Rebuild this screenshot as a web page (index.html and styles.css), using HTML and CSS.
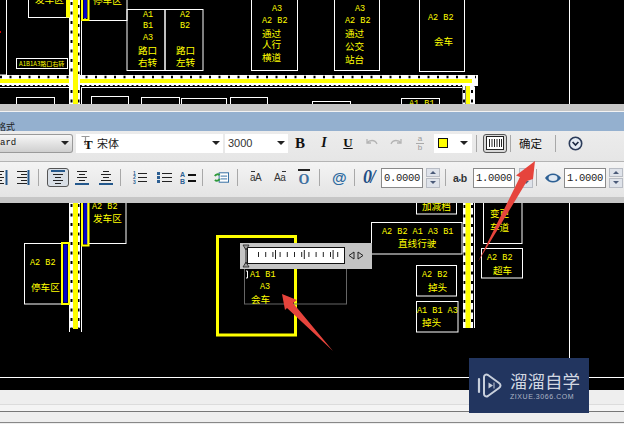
FILE: index.html
```html
<!DOCTYPE html>
<html lang="en">
<head>
    <meta charset="UTF-8">
    <meta name="viewport" content="width=device-width, initial-scale=1.0">
    <title>文字格式</title>
    <link rel="stylesheet" href="styles.css">
</head>
<body>
<div class="page">

    <!-- drawing above the text editor -->
    <div class="cad cad-top">
        <svg class="drawing" width="624" height="104" viewBox="0 0 624 104">
            <g class="box">
                <rect x="28.5" y="-10" width="40" height="27.5"/>
                <rect x="85" y="-10" width="42" height="30.5"/>
                <rect x="-10" y="-10" width="16.5" height="85"/>
                <rect x="16.5" y="58.5" width="51" height="10"/>
                <rect x="127" y="9.5" width="38" height="61"/>
                <rect x="165" y="9.5" width="38" height="61"/>
                <rect x="251.5" y="-10" width="46" height="80.5"/>
                <rect x="334.5" y="-10" width="45" height="80.5"/>
                <rect x="419.5" y="-10" width="45" height="81.5"/>
                <rect x="16.5" y="97.5" width="38" height="20"/>
                <rect x="91.5" y="96.5" width="37" height="20"/>
                <rect x="141.5" y="97.5" width="38" height="20"/>
                <rect x="181.5" y="98.5" width="45" height="20"/>
                <rect x="230.5" y="97.5" width="37" height="20"/>
                <rect x="312.5" y="101.5" width="38" height="20"/>
                <rect x="401.5" y="98.5" width="38" height="20"/>
                <line x1="569.5" y1="0" x2="569.5" y2="104"/>
            </g>
            <!-- right road, turn -->
            <line class="road-edge" x1="464" y1="76" x2="464" y2="104"/>
            <line class="road-dots" x1="464" y1="90" x2="464" y2="104"/>
            <line class="road-edge-wide" x1="472" y1="76" x2="472" y2="104"/>
            <line class="road-dots" x1="472" y1="90" x2="472" y2="104"/>
            <line class="road-core" x1="468" y1="80" x2="468" y2="104"/>
            <line class="road-line" x1="474.5" y1="87" x2="474.5" y2="104"/>
            <!-- main road across -->
            <rect class="road-band" x="0" y="75" width="478" height="11"/>
            <line class="road-marks" x1="0" y1="77" x2="476" y2="77"/>
            <line class="road-scallop" x1="0" y1="85.5" x2="462" y2="85.5"/>
            <line class="road-core" x1="0" y1="81" x2="472" y2="81"/>
            <line class="road-line" x1="0" y1="87.5" x2="69" y2="87.5"/>
            <line class="road-line" x1="81" y1="87.5" x2="462" y2="87.5"/>
            <!-- left road -->
            <rect class="road-band" x="69" y="0" width="11" height="104"/>
            <line class="road-dots" x1="71.5" y1="2" x2="71.5" y2="74"/>
            <line class="road-dots" x1="78.5" y1="5" x2="78.5" y2="74"/>
            <line class="road-dots" x1="71.5" y1="90" x2="71.5" y2="104"/>
            <line class="road-dots" x1="78.5" y1="90" x2="78.5" y2="104"/>
            <line class="road-core road-core-wide" x1="75.5" y1="0" x2="75.5" y2="104"/>
            <line class="road-line" x1="81.5" y1="21" x2="81.5" y2="75"/>
            <line class="road-line" x1="81.5" y1="88" x2="81.5" y2="104"/>
            <!-- bays -->
            <rect class="bay" x="66" y="-6" width="4" height="23.5"/>
            <rect class="bay-frame" x="82" y="-6" width="6.5" height="26"/>
            <rect class="bay-fill" x="83.5" y="-6" width="3.5" height="24"/>
            <rect class="red-dot" x="0" y="31" width="1" height="2"/>

            <text class="cn" x="35" y="3">发车区</text>
            <text class="cn" x="93" y="4">停车区</text>
            <text class="mini" x="19" y="66">A1B1A3路口右转</text>
            <text class="lt" x="143" y="17">A1</text>
            <text class="lt" x="143" y="28">B1</text>
            <text class="lt" x="143" y="40">A3</text>
            <text class="cn" x="138" y="53.5">路口</text>
            <text class="cn" x="138" y="66">右转</text>
            <text class="lt" x="180" y="17">A2</text>
            <text class="lt" x="180" y="28">B2</text>
            <text class="cn" x="176" y="53.5">路口</text>
            <text class="cn" x="176" y="66">左转</text>
            <text class="lt" x="272" y="10.5">A3</text>
            <text class="lt" x="262" y="23">A2 B2</text>
            <text class="cn" x="262" y="36.5">通过</text>
            <text class="cn" x="262" y="48">人行</text>
            <text class="cn" x="262" y="61">横道</text>
            <text class="lt" x="355" y="10.5">A3</text>
            <text class="lt" x="345" y="23">A2 B2</text>
            <text class="cn" x="345" y="36.5">通过</text>
            <text class="cn" x="345" y="49.5">公交</text>
            <text class="cn" x="345" y="62.5">站台</text>
            <text class="lt" x="428" y="20">A2 B2</text>
            <text class="cn" x="434" y="45">会车</text>
            <text class="lt" x="409" y="106">A1 B1</text>
        </svg>
    </div>

    <!-- text formatting toolbar -->
    <div class="editor">
        <div class="editor-strip"></div>
        <div class="editor-title"><span>文字格式</span></div>

        <div class="tool-row tool-row-top">
            <div class="select select-style">
                <span class="select-label">Standard</span>
                <i class="caret"></i>
            </div>
            <div class="select select-font ml-3">
                <span class="tt-icon">
                    <svg width="9" height="9" viewBox="0 0 9 9"><path d="M0.500 0.500h8M4.500 0.500v8M3 8.500h3" fill="none" stroke="#999" stroke-width="1.200"/></svg>
                    <b>T</b>
                </span>
                <span class="font-name">宋体</span>
                <i class="caret"></i>
            </div>
            <div class="select select-size ml-2">
                <span class="size-value">3000</span>
                <i class="caret"></i>
            </div>
            <span class="tool serif-btn bold">B</span>
            <span class="tool serif-btn italic">I</span>
            <span class="tool serif-btn underline">U</span>
            <span class="tool">
                <svg width="16" height="12" viewBox="0 0 16 12"><path class="dim-icon" d="M3 2v4h4M3 6c2-3 8-4 10 1"/></svg>
            </span>
            <span class="tool">
                <svg width="16" height="12" viewBox="0 0 16 12"><path class="dim-icon" d="M13 2v4H9M13 6c-2-3-8-4-10 1"/></svg>
            </span>
            <span class="tool stack-icon">
                <small>a</small><em></em><small>b</small>
            </span>
            <div class="select select-color ml-2">
                <i class="swatch"></i>
                <i class="caret caret-dark"></i>
            </div>
            <i class="sep ml-4"></i>
            <span class="ruler-btn ml-6">
                <svg width="18" height="14" viewBox="0 0 18 14"><rect x="0.5" y="0.5" width="17" height="13" fill="#fff" stroke="#222"/><path d="M3.5 3v8M6 3v8M8.5 3v8M11 3v8M13.5 3v8M15.5 3v8" stroke="#222" fill="none"/></svg>
            </span>
            <i class="sep ml-3"></i>
            <span class="ok-btn ml-8">确定</span>
            <i class="sep ml-12"></i>
            <span class="more-btn ml-12">
                <svg width="15" height="15" viewBox="0 0 15 15"><circle cx="7.5" cy="7.5" r="6.2" fill="#e4ebf4" stroke="#2c3c5a" stroke-width="1.6"/><path d="M4.6 6l2.9 3 2.9-3" fill="none" stroke="#1c2a44" stroke-width="1.7"/></svg>
            </span>
        </div>

        <div class="tool-row tool-row-bottom">
            <span class="tool-icon w-8">
                <svg width="8" height="15" viewBox="0 0 8 15"><path class="al-dark" d="M0 1.5h4M0 4.5h2M0 7.5h4M0 10.5h2M0 13.5h4"/><path class="al-blue" d="M6.5 0v15"/></svg>
            </span>
            <span class="tool-icon w-13 ml-9">
                <svg width="13" height="15" viewBox="0 0 13 15"><path class="al-dark" d="M0 1.5h10M4 4.5h6M0 7.5h10M4 10.5h6M0 13.5h10"/><path class="al-blue" d="M11.5 0v15"/></svg>
            </span>
            <i class="sep ml-8"></i>
            <span class="tool-icon tool-active ml-8">
                <svg width="14" height="15" viewBox="0 0 14 15"><path class="al-blue" d="M0 1h14"/><path class="al-dark" d="M2 4.5h10M4 7.5h6M2 10.5h10M4 13.5h6"/></svg>
            </span>
            <span class="tool-icon w-14 ml-6">
                <svg width="14" height="15" viewBox="0 0 14 15"><path class="al-dark" d="M2 1.5h10M4 4.5h6M2 7.5h10M4 10.5h6"/><path class="al-blue" d="M0 14h14"/></svg>
            </span>
            <span class="tool-icon w-14 ml-10">
                <svg width="14" height="15" viewBox="0 0 14 15"><path class="al-dark" d="M4 1.5h6M2 4.5h10M4 7.5h6M2 10.5h10"/><path class="al-blue" d="M0 14h14"/></svg>
            </span>
            <i class="sep ml-7"></i>
            <span class="tool-icon w-14 ml-12 num-list">
                <small>1<br>2<br>3</small>
                <svg width="9" height="13" viewBox="0 0 9 13"><path class="al-dark" d="M0 2.5h9M0 6.5h9M0 10.5h9"/></svg>
            </span>
            <span class="tool-icon w-15 ml-10">
                <svg width="15" height="13" viewBox="0 0 15 13"><path d="M0 1h3v3H0zM0 5h3v3H0zM0 9h3v3H0z" fill="#2c5f93"/><path class="al-dark" d="M5 2.5h10M5 6.5h10M5 10.5h10"/></svg>
            </span>
            <span class="tool-icon w-16 ml-8 ab-list">
                <small>A<br>B</small>
                <svg width="9" height="12" viewBox="0 0 9 12"><path d="M1 3h8M1 9h8" stroke="#111" stroke-width="2" fill="none"/></svg>
            </span>
            <i class="sep ml-6"></i>
            <span class="tool-icon w-15 ml-11">
                <svg width="16" height="13" viewBox="0 0 16 13"><rect x="5.5" y="1.5" width="10" height="10" fill="#fff" stroke="#2c6aa0"/><path d="M7 5h7M7 8h7" stroke="#2c6aa0" fill="none"/><path d="M1 5a3 3 0 0 1 5-1M6 8a3 3 0 0 1-5 1" fill="none" stroke="#2f9a3c" stroke-width="2"/></svg>
            </span>
            <i class="sep ml-8"></i>
            <span class="case-icon ml-12"><u></u>aA</span>
            <span class="case-icon case-right ml-12"><u></u>Aa</span>
            <span class="overline-icon ml-12">O</span>
            <i class="sep ml-9"></i>
            <span class="at-icon ml-12">@</span>
            <i class="sep ml-8"></i>
            <span class="oblique-icon ml-8">0/</span>
            <span class="num-input ml-5">0.0000</span>
            <span class="spin ml-3"><i class="up"></i><i class="down"></i></span>
            <i class="sep ml-5"></i>
            <span class="track-icon ml-7">a<small>•</small>b</span>
            <span class="num-input ml-5">1.0000</span>
            <span class="spin ml-4"><i class="up"></i><i class="down"></i></span>
            <i class="sep ml-3"></i>
            <span class="tool-icon w-16 ml-8">
                <svg width="16" height="10" viewBox="0 0 16 10"><path d="M0 5c4-6 12-6 16 0-4 6-12 6-16 0z" fill="#2c5f93"/><ellipse cx="8" cy="5" rx="4.5" ry="3" fill="#dfe8f2"/></svg>
            </span>
            <span class="num-input ml-3">1.0000</span>
            <span class="spin ml-3"><i class="up"></i><i class="down"></i></span>
        </div>
        <div class="editor-foot"></div>
    </div>

    <!-- drawing below the text editor -->
    <div class="cad cad-bottom">
        <svg class="drawing" width="624" height="187" viewBox="0 203 624 187">
            <g class="box">
                <rect x="88" y="190" width="38" height="53.5"/>
                <rect x="24.5" y="243.5" width="37" height="60.5"/>
                <rect x="416.5" y="190" width="40" height="24"/>
                <rect x="483.5" y="190" width="38.5" height="53.5"/>
                <rect x="481.5" y="248.5" width="41" height="29.5"/>
                <rect x="371.5" y="222.5" width="90.5" height="31.5"/>
                <rect x="416.5" y="265.5" width="40" height="30.5"/>
                <rect x="416.5" y="301.5" width="41.5" height="30.5"/>
                <line x1="569.5" y1="203" x2="569.5" y2="377"/>
                <line x1="0" y1="377.5" x2="624" y2="377.5"/>
            </g>
            <!-- left road -->
            <rect class="road-band" x="69" y="203" width="11" height="125"/>
            <line class="road-dots" x1="71.5" y1="204" x2="71.5" y2="328"/>
            <line class="road-dots" x1="78.5" y1="204" x2="78.5" y2="328"/>
            <line class="road-core road-core-wide" x1="75.5" y1="203" x2="75.5" y2="329"/>
            <line class="road-line" x1="69.5" y1="300" x2="69.5" y2="332"/>
            <line class="road-line" x1="81.5" y1="203" x2="81.5" y2="332"/>
            <!-- right road -->
            <rect class="road-band" x="463" y="203" width="10" height="125"/>
            <line class="road-dots" x1="464.5" y1="205" x2="464.5" y2="328"/>
            <line class="road-dots" x1="472" y1="205" x2="472" y2="328"/>
            <line class="road-core road-core-wide" x1="468" y1="203" x2="468" y2="328"/>
            <line class="road-line" x1="474.5" y1="203" x2="474.5" y2="328"/>
            <!-- bays -->
            <rect class="bay-frame" x="82" y="198" width="6.5" height="47.5"/>
            <rect class="bay-fill" x="83.5" y="198" width="3.5" height="46"/>
            <rect class="bay-frame" x="62" y="243" width="7" height="61"/>
            <rect class="bay-fill" x="63.5" y="244.5" width="4" height="58"/>

            <text class="lt" x="92" y="209">A2 B2</text>
            <text class="cn" x="93" y="222">发车区</text>
            <text class="lt" x="30" y="265">A2 B2</text>
            <text class="cn" x="31" y="291">停车区</text>
            <text class="cn" x="422" y="210">加减档</text>
            <text class="cn" x="490" y="217">变更</text>
            <text class="cn" x="490" y="231">车道</text>
            <text class="lt" x="487" y="260">A2 B2</text>
            <text class="cn" x="493" y="274">超车</text>
            <text class="lt" x="382" y="234">A2 B2 A1 A3 B1</text>
            <text class="cn" x="398" y="247">直线行驶</text>
            <text class="lt" x="422" y="277">A2 B2</text>
            <text class="cn" x="428" y="291">掉头</text>
            <text class="lt" x="417" y="313">A1 B1 A3</text>
            <text class="cn" x="422" y="326">掉头</text>

            <!-- text being edited, with its ruler -->
            <rect class="edit-frame" x="217.5" y="236.5" width="78" height="98.5"/>
            <rect class="edit-box" x="244.5" y="260" width="102" height="44"/>
            <rect class="ruler-panel" x="240" y="243" width="132" height="26"/>
            <rect class="ruler-body" x="247.5" y="247.5" width="97" height="16"/>
            <line class="ruler-ticks" x1="258" y1="254.5" x2="340" y2="254.5"/>
            <line class="ruler-ticks-long" x1="275" y1="254.5" x2="340" y2="254.5"/>
            <path class="ruler-grip" d="M243 245h6l-3 5zM243 267h6l-3-5z"/>
            <line class="ruler-stem" x1="246" y1="248" x2="246" y2="264"/>
            <path class="ruler-arrows" d="M354 252v7l-5-3.500zM358 252v7l5-3.500z"/>
            <path class="cursor-mark" d="M246 271h1.500v7H246"/>
            <text class="lt" x="250" y="277">A1 B1</text>
            <text class="lt" x="260" y="289">A3</text>
            <text class="cn" x="251" y="303">会车</text>
        </svg>
    </div>

    <div class="statusbar">
        <div class="status-a"></div>
        <div class="status-b"></div>
        <div class="status-c"></div>
    </div>

    <!-- callout arrows over everything -->
    <svg class="callouts" width="624" height="424" viewBox="0 0 624 424">
        <polygon class="arrow" points="282,294 297,300 293,303 333,351 287,308 285,310"/>
        <polygon class="arrow" points="535,161 533,179 527,181 478,262 520,177 516,175.500"/>
    </svg>

    <div class="watermark">
        <svg class="wm-logo" width="26" height="25" viewBox="0 0 26 25">
            <path d="M2 6v13" fill="none" stroke="#c9d0dc" stroke-width="2.200" stroke-linecap="round"/>
            <path d="M7 4c0-2 2-3 4-2l11 8c2 1.500 2 3.500 0 5L11 23c-2 1-4 0-4-2z" fill="none" stroke="#c9d0dc" stroke-width="2"/>
            <path d="M11.500 9.500v6l4.500-3z" fill="#c9d0dc"/>
            <path d="M17 9.500v6" fill="none" stroke="#c9d0dc"/>
        </svg>
        <div class="wm-text">
            <span class="wm-name">溜溜自学</span>
            <span class="wm-url">ZIXUE.3066.COM</span>
        </div>
    </div>
</div>
</body>
</html>
```

FILE: styles.css
```css
* { box-sizing: border-box; }
html, body {
    margin: 0;
    background-color: #000;
}
.page {
    position: relative;
    display: flex;
    flex-direction: column;
    width: 624px;
    height: 424px;
    overflow: hidden;
    font-family: 'Liberation Sans', 'Noto Sans CJK SC', sans-serif;
}

/* cad drawing */
.cad {
    background-color: #000;
}
.cad-top {
    height: 104px;
}
.cad-bottom {
    height: 187px;
}
.drawing {
    display: block;
}
.box rect, .box line {
    fill: none;
    stroke: #fff;
    stroke-width: 1;
}
.lt {
    fill: #ffff00;
    font: 8.5px 'Liberation Mono', monospace;
}
.cn {
    fill: #ffff00;
    font: 9.6px 'Noto Sans CJK SC', sans-serif;
}
.mini {
    fill: #ffff00;
    font: 6px 'Noto Sans CJK SC', sans-serif;
}
.road-band {
    fill: #fff;
}
.road-edge {
    stroke: #fff;
    stroke-width: 3;
}
.road-edge-wide {
    stroke: #fff;
    stroke-width: 5;
}
.road-line {
    stroke: #fff;
    stroke-width: 1;
}
.road-dots {
    stroke: #000;
    stroke-width: 2;
    stroke-dasharray: 3 6.500;
}
.road-marks {
    stroke: #000;
    stroke-width: 2.500;
    stroke-dasharray: 2 7.500;
}
.road-scallop {
    stroke: #000;
    stroke-width: 1;
    stroke-dasharray: 2 2.700;
}
.road-core {
    stroke: #ffff00;
    stroke-width: 4;
}
.road-core-wide {
    stroke-width: 5;
}
.bay {
    fill: #ffff00;
}
.bay-frame {
    fill: none;
    stroke: #ffff00;
    stroke-width: 2;
}
.bay-fill {
    fill: #0000c8;
}
.red-dot {
    fill: #d00;
}
.edit-frame {
    fill: none;
    stroke: #ffff00;
    stroke-width: 3;
}
.edit-box {
    fill: none;
    stroke: #666;
    stroke-width: 1;
}
.ruler-panel {
    fill: #c4c4c4;
}
.ruler-body {
    fill: #fff;
    stroke: #111;
    stroke-width: 1;
}
.ruler-ticks {
    stroke: #222;
    stroke-width: 5;
    stroke-dasharray: 1 6.200;
}
.ruler-ticks-long {
    stroke: #222;
    stroke-width: 9;
    stroke-dasharray: 1 27.800;
}
.ruler-grip {
    fill: #999;
    stroke: #222;
    stroke-width: 0.800;
}
.ruler-stem {
    stroke: #222;
    stroke-width: 1;
}
.ruler-arrows {
    fill: none;
    stroke: #222;
    stroke-width: 1;
}
.cursor-mark {
    fill: none;
    stroke: #fff;
    stroke-width: 1;
}

/* editor panel */
.editor {
    display: flex;
    flex-direction: column;
    height: 99px;
    background-color: #ededed;
}
.editor-strip {
    height: 8px;
    background-color: #c6c6c6;
    border-bottom: 1px solid #f2f2f2;
}
.editor-title {
    height: 19px;
    padding-left: 0;
    overflow: hidden;
    background-color: #94b0cf;
}
.editor-title span {
    display: block;
    margin-top: 8px;
    margin-left: -21px;
    font: 9px 'Noto Sans CJK SC', sans-serif;
    color: #222;
}
.tool-row {
    display: flex;
    align-items: center;
}
.tool-row-top {
    height: 31px;
    padding-bottom: 6px;
    background: linear-gradient(#ececec, #e6e6e6);
    border-bottom: 1px solid #b4b4b4;
}
.tool-row-bottom {
    height: 35px;
    padding-bottom: 4px;
    background: linear-gradient(#f4f4f4, #e4e4e4);
}
.editor-foot {
    height: 6px;
    background-color: #c6c6c6;
}

.ml-2 { margin-left: 2px; }
.ml-3 { margin-left: 3px; }
.ml-4 { margin-left: 4px; }
.ml-5 { margin-left: 5px; }
.ml-6 { margin-left: 6px; }
.ml-7 { margin-left: 7px; }
.ml-8 { margin-left: 8px; }
.ml-9 { margin-left: 9px; }
.ml-10 { margin-left: 10px; }
.ml-11 { margin-left: 11px; }
.ml-12 { margin-left: 12px; }
.w-8 { width: 8px; }
.w-13 { width: 13px; }
.w-14 { width: 14px; }
.w-15 { width: 15px; }
.w-16 { width: 16px; }

.select {
    display: flex;
    align-items: center;
    flex: none;
    height: 19px;
    background-color: #fff;
    overflow: hidden;
}
.select-style {
    width: 73px;
    border: 1px solid #9a9a9a;
    border-left: none;
    border-radius: 0 3px 3px 0;
    background: linear-gradient(#f7f7f7, #cfcfcf);
}
.select-label {
    flex: 1;
    margin-left: -27px;
    font: 9px 'Liberation Mono', monospace;
    color: #111;
}
.caret {
    flex: none;
    width: 0;
    height: 0;
    margin-right: 3px;
    border: 4px solid transparent;
    border-top: 4px solid #222;
    border-bottom: none;
}
.select-font {
    width: 147px;
    padding-left: 5px;
}
.tt-icon {
    position: relative;
    width: 12px;
    height: 14px;
}
.tt-icon svg {
    position: absolute;
    left: 0;
    top: 0;
}
.tt-icon b {
    position: absolute;
    left: 3px;
    top: 2px;
    font: bold 13px/13px 'Liberation Serif', serif;
    color: #111;
}
.font-name {
    flex: 1;
    margin-left: 4px;
    font: 11px 'Noto Sans CJK SC', sans-serif;
    color: #222;
}
.select-size {
    width: 63px;
    padding-left: 3px;
}
.size-value {
    flex: 1;
    font-size: 11px;
    color: #333;
}
.tool {
    display: flex;
    align-items: center;
    justify-content: center;
    flex: none;
    width: 24px;
}
.serif-btn {
    font: 14px 'Liberation Serif', serif;
    color: #111;
}
.bold {
    font-weight: bold;
    font-size: 15px;
}
.italic {
    font-weight: bold;
    font-style: italic;
}
.underline {
    font-weight: bold;
    font-size: 13px;
    text-decoration: underline;
}
.dim-icon {
    fill: none;
    stroke: #b4b4b4;
    stroke-width: 1.300;
}
.stack-icon {
    flex-direction: column;
    line-height: 8px;
}
.stack-icon small {
    font-size: 8px;
    color: #999;
}
.stack-icon em {
    width: 8px;
    height: 1px;
    background-color: #aaa;
}
.select-color {
    width: 38px;
    padding-left: 4px;
    justify-content: space-between;
}
.swatch {
    flex: none;
    width: 10px;
    height: 10px;
    background-color: #ffff00;
    border: 1px solid #111;
}
.caret-dark {
    margin-right: 4px;
}
.sep {
    flex: none;
    width: 1px;
    height: 17px;
    background-color: #a8a8a8;
}
.ruler-btn {
    display: flex;
    align-items: center;
    justify-content: center;
    flex: none;
    width: 24px;
    height: 19px;
    background-color: #d8d8d8;
    border: 1px solid #555;
    border-radius: 3px;
}
.ok-btn {
    flex: none;
    width: 24px;
    font-size: 11.500px;
    color: #111;
    white-space: nowrap;
}
.more-btn {
    display: flex;
    flex: none;
}
.tool-icon {
    display: flex;
    align-items: center;
    justify-content: center;
    flex: none;
}
.tool-active {
    width: 22px;
    height: 19px;
    background-color: #d9dfe6;
    border: 1px solid #555;
    border-radius: 3px;
}
.al-dark {
    fill: none;
    stroke: #222;
    stroke-width: 1;
}
.al-blue {
    fill: none;
    stroke: #24588c;
    stroke-width: 2;
}
.num-list small {
    width: 5px;
    font: bold 5px/4.500px 'Liberation Sans', sans-serif;
    color: #2c5f93;
}
.ab-list small {
    width: 7px;
    font: bold 7px/7px 'Liberation Sans', sans-serif;
    color: #2c5f93;
}
.case-icon {
    position: relative;
    flex: none;
    width: 12px;
    font-size: 10px;
    letter-spacing: -0.500px;
    color: #333;
}
.case-icon u {
    position: absolute;
    left: 1px;
    top: -1px;
    width: 4px;
    height: 1px;
    background-color: #333;
}
.case-right u {
    left: 8px;
}
.overline-icon {
    flex: none;
    width: 12px;
    padding-top: 2px;
    font: bold 14px/13px 'Liberation Serif', serif;
    color: #3f6f9f;
    text-align: center;
    border-top: 2px solid #222;
}
.at-icon {
    flex: none;
    width: 14px;
    font-weight: bold;
    font-size: 15px;
    color: #2c6aa0;
}
.oblique-icon {
    flex: none;
    width: 13px;
    font: italic bold 18px 'Liberation Serif', serif;
    color: #1f4f86;
    letter-spacing: -1.500px;
}
.num-input {
    flex: none;
    width: 42px;
    height: 20px;
    padding-left: 2px;
    font: 10.500px/18px 'Liberation Mono', monospace;
    letter-spacing: -0.300px;
    color: #222;
    background-color: #fff;
    border: 1px solid #8a8a8a;
}
.spin {
    display: flex;
    flex-direction: column;
    flex: none;
    width: 14px;
    height: 20px;
    gap: 1px;
}
.spin i {
    display: flex;
    flex: 1;
    align-items: center;
    justify-content: center;
    background-color: #dfe3ea;
    border: 1px solid #b8bcc4;
}
.spin i::before {
    content: "";
    border: 3px solid transparent;
}
.spin .up::before {
    border-top: none;
    border-bottom-color: #4a5a78;
}
.spin .down::before {
    border-bottom: none;
    border-top-color: #4a5a78;
}
.track-icon {
    flex: none;
    width: 15px;
    font-size: 10.500px;
    font-weight: bold;
    letter-spacing: -0.500px;
    color: #333;
    white-space: nowrap;
}
.track-icon small {
    color: #2c6aa0;
    font-size: 8px;
}

/* status bar */
.statusbar {
    flex: 1;
    background-color: #eee;
}
.status-a {
    height: 15px;
    border-bottom: 1px solid #dcdcdc;
}
.status-b {
    height: 7px;
    background-color: #f4f4f4;
    border-bottom: 1px solid #777;
}
.status-c {
    height: 11px;
    border-bottom: 1px solid #888;
}

/* overlays */
.callouts {
    position: absolute;
    left: 0;
    top: 0;
    pointer-events: none;
}
.arrow {
    fill: #e6443c;
}
.watermark {
    position: absolute;
    left: 469px;
    top: 358px;
    display: flex;
    align-items: center;
    gap: 7px;
    width: 120px;
    height: 55px;
    padding-left: 8px;
    background-color: #22355f;
}
.wm-text {
    display: flex;
    flex-direction: column;
    gap: 1px;
}
.wm-name {
    font: 17.500px/20px 'Noto Sans CJK SC', sans-serif;
    color: #d3d8e2;
    white-space: nowrap;
}
.wm-url {
    font-size: 7px;
    line-height: 9px;
    letter-spacing: 0.550px;
    color: #aeb6c6;
    white-space: nowrap;
}
```
